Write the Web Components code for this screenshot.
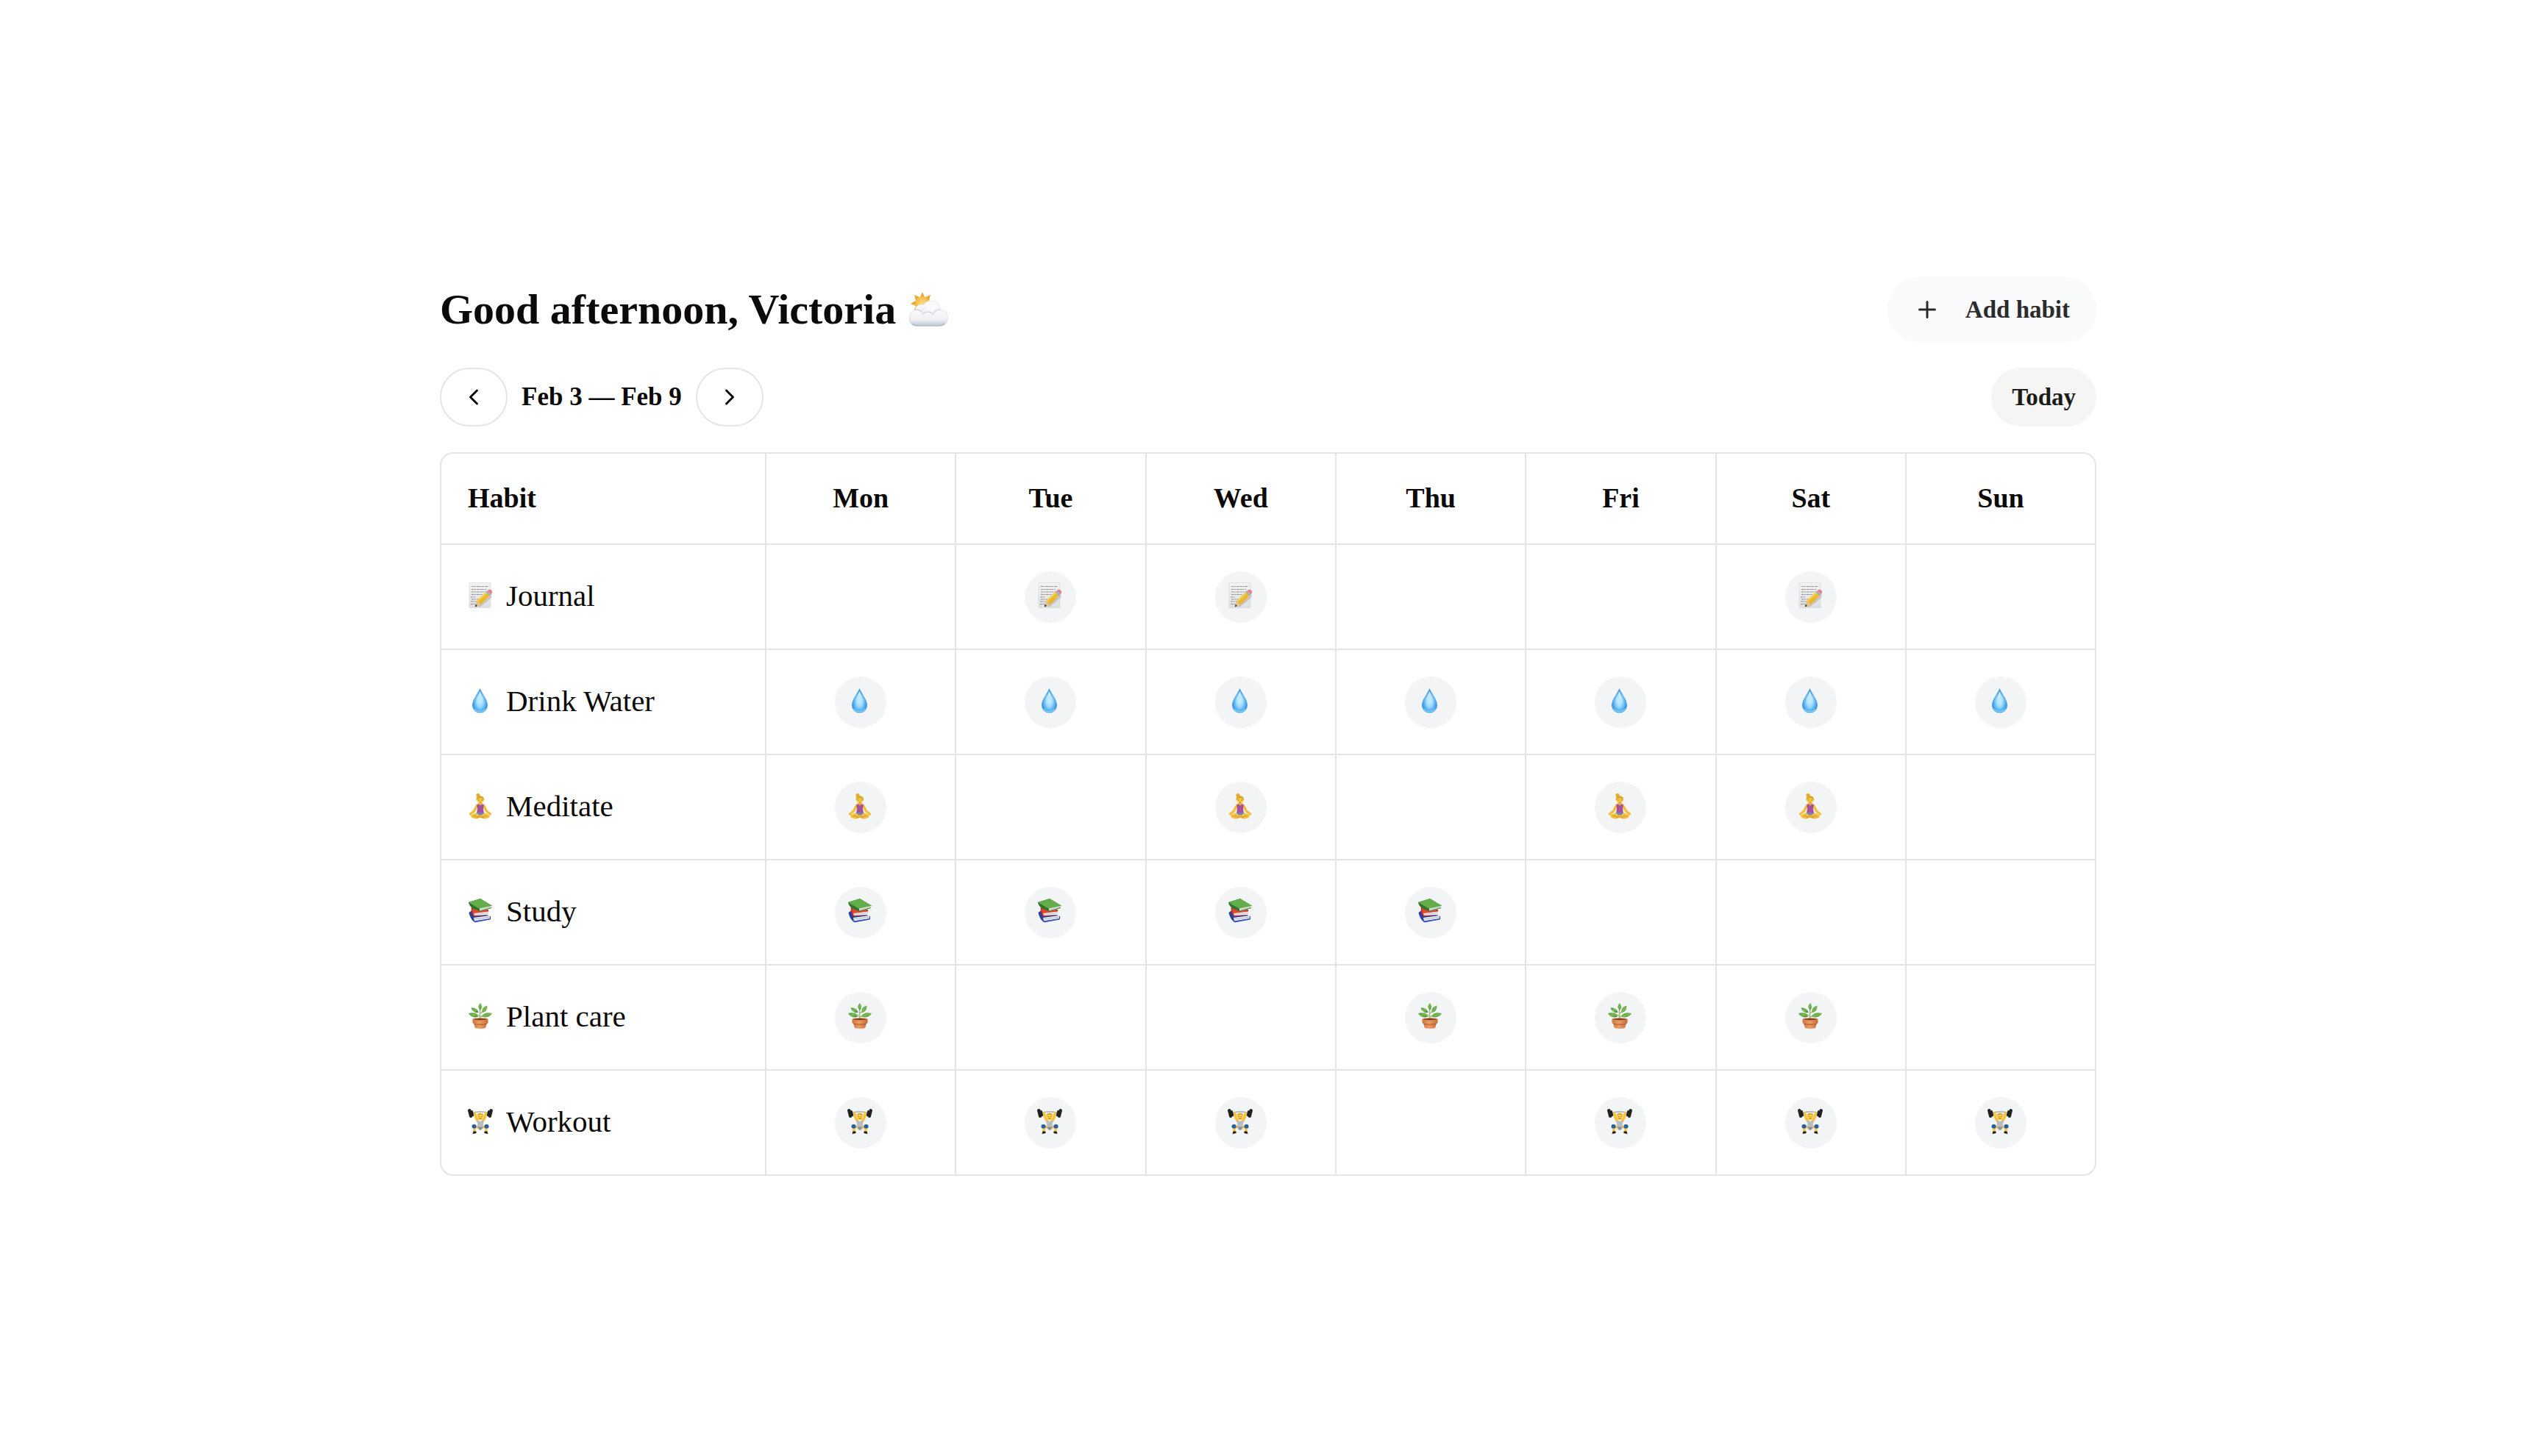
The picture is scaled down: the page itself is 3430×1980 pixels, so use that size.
<!DOCTYPE html>
<html lang="en">
<head>
<meta charset="utf-8">
<title>Habit tracker</title>
<style>
  body { margin: 0; background: #fff; color: #0c0a09; font-family: "Liberation Serif", serif; }
</style>
</head>
<body>
<habit-app>
  <habit-greeting>Good afternoon, Victoria</habit-greeting>
  <week-nav>Feb 3 — Feb 9</week-nav>
  <habit-table></habit-table>
</habit-app>

<script>
const attach = (el, html) => { el.attachShadow({ mode: "open" }).innerHTML = html; };

const ICONS = {
  cloud: ["0 0 54 48", `
    <defs>
      <radialGradient id="sun"><stop offset="0" stop-color="#fbe08a"/><stop offset="1" stop-color="#f1b93f"/></radialGradient>
      <radialGradient id="puff" cx=".5" cy=".35" r=".7"><stop offset="0" stop-color="#fff"/><stop offset=".6" stop-color="#f4f6f8"/><stop offset="1" stop-color="#cfd6df"/></radialGradient>
      <linearGradient id="base" x2="0" y2="1"><stop offset="0" stop-color="#fafbfc"/><stop offset=".65" stop-color="#eff1f5"/><stop offset="1" stop-color="#bcc5d1"/></linearGradient>
    </defs>
    <path fill="#e9a63a" d="M19 0l3 7h-6zM8 4l7 3-5 5zM30 4l-2 8-5-5zM3 16l7-4v7zM7 25l5-7 3 5z"/>
    <circle cx="19" cy="16" r="10" fill="url(#sun)"/>
    <path fill="url(#base)" stroke="#d3d9e1" stroke-width=".6" d="M12 46.500C4 46.500 1 41 1 35.500 1 29 5 25 9.500 24.500 10 19 15 16 20 17.500 23 13.500 27 12 31 12 38 12 43 17 43.500 24 50 24.500 53.500 29 53.500 35.500 53.500 42 49 46.500 42 46.500z"/>
    <circle cx="31" cy="23.500" r="11" fill="url(#puff)" opacity=".6"/>
    <path fill="url(#base)" opacity=".75" d="M4 42C1 36 4 26 12 25 17 25 19 27 20 30 24 26 31 27 34 31 37 25 43 24 47 26 54 29 54 39 50 43 46 47 8 47 4 42z"/>
    <path fill="none" stroke="#cbd2dc" stroke-width="1.200" d="M9.500 24.500c4-.5 8 1 10 4M19 31c4-5 11-5 14-1M33 31c2-5 6-7 10.500-7"/>
    <path fill="none" stroke="#aeb8c5" stroke-width="1.500" opacity=".7" d="M5 43c3 3 6 3 9 3h27c4 0 6-1 8-3"/>`],
  journal: ["0 0 36 36", `
    <defs><linearGradient id="page" x2="0" y2="1"><stop offset="0" stop-color="#f3f3f3"/><stop offset="1" stop-color="#dfdfdf"/></linearGradient>
    <linearGradient id="wood" x2="1" y2="1"><stop offset="0" stop-color="#f9d84c"/><stop offset="1" stop-color="#dd9d1a"/></linearGradient></defs>
    <path fill="url(#page)" stroke="#d8d8d8" stroke-width=".7" d="M2 .5h29v34H2z"/>
    <g fill="none" stroke="#888" stroke-width=".9" stroke-dasharray="3 .7 2 1 4 .8"><path d="M5 5.500h23M5 9.500h20M5 13h20M5 16.500h15M4 20h6M5 23h9M4 26h8M4 29.500h6"/></g>
    <path fill="#777" opacity=".3" d="M13 33l20-17-1 5-15 12z"/>
    <path fill="url(#wood)" d="M12 25l13.500-13 5 5.500-13.500 13z"/>
    <path fill="none" stroke="#fae77a" d="M13 25.500l13-12"/>
    <path fill="#e8bd88" d="M12 25l5 5.500-7 2.500z"/><path fill="#333" d="M10.500 29.500l2.500 2.500-3 1.500z"/>
    <path fill="#9eb0c3" d="M24.500 13l2-2 5 5.500-2 2z"/>
    <path fill="#e8808a" d="M26.500 11l2-1c3-1 5 2 4.500 4l-1.500 2.500z"/>`],
  water: ["0 0 36 36", `
    <defs><radialGradient id="drop" cx=".5" cy=".55" r=".55"><stop offset="0" stop-color="#c4eeff"/><stop offset=".4" stop-color="#93d5fa"/><stop offset=".75" stop-color="#46a3eb"/><stop offset="1" stop-color="#3c8fdd"/></radialGradient>
    <linearGradient id="shine" x2="0" y2="1"><stop offset="0" stop-color="#f2fcff"/><stop offset="1" stop-color="#c4edff" stop-opacity="0"/></linearGradient></defs>
    <path fill="url(#drop)" d="M16.500 1C18 6 27 16 27 24a10.500 10.500 0 0 1-21 0C6 16 15 6 16.500 1z"/>
    <path fill="url(#shine)" d="M16.500 5c2 6 5 10 5 15 0 6-10 6-10 0 0-5 3-9 5-15z"/>
    <path fill="none" stroke="#85ddff" stroke-width="1.500" opacity=".8" d="M9 29c3 5 12 5 15 0"/>`],
  meditate: ["0 0 36 36", `
    <g fill="none" stroke="#f3bd3a" stroke-linecap="round" stroke-linejoin="round">
      <path stroke-width="3.500" d="M12.500 17.500L8.500 25 3.500 29M21.500 17.500L25.500 25 30.500 29"/>
      <path stroke-width="3.500" d="M13 28.500L6 31.500M21 28.500l7 3"/>
      <path stroke-width="4" d="M7 32.500c4 1.500 8 .5 10-1 2 1.500 6 2.500 10 1"/>
    </g>
    <path fill="none" stroke="#c88920" stroke-width=".8" d="M8 31.500c3 1 6 0 9-2 3 2 6 3 9 2M12 34l5-1.500 5 1.500"/>
    <path fill="#e6ab30" d="M14.500 12h5v5h-5z"/>
    <circle cx="17" cy="9.500" r="4.800" fill="#f8cc45"/>
    <path fill="#dca62e" d="M11.700 11c-1-5 3-8 6-6.500 4 0 5 4 4 6.500-1-3-3-4-5-3.500-2 0-4 1-5 3.500z"/>
    <circle cx="14" cy="3.500" r="2.600" fill="#e3ac31"/>
    <path fill="none" stroke="#9c6a18" stroke-width=".8" d="M14 10h2M18 10h2M16 13h2"/>
    <path fill="#a8509a" d="M12.500 16l2-1c1 3 4 3 5 0l2 1c.5 3-.5 5-.5 6l1 6h-10l1-6c0-1-1-3-.5-6z"/>
    <path fill="#6f84bb" d="M12.500 27h9l-1 2.500-3.500 1-3.500-1z"/>`],
  study: ["0 0 36 36", `
    <path fill="#273f9d" d="M1.500 20l5.500-4 24 9v4l-22 4c-4-3-6-7-7.500-13z"/>
    <path fill="#eef0f4" d="M8 27l22-3v4.500L9 31.500z"/><path stroke="#8c98bd" stroke-width=".7" d="M9 29l21-3"/>
    <path fill="#3657bd" d="M9 31.500l21-3.500.5 1.500-21 4z"/>
    <path fill="#c52e22" d="M5 11l23 5v7L8 25.500c-3-4-4-9-3-14.500z"/>
    <path fill="#e34632" d="M6 12l22 6-21 3z"/>
    <path fill="#f3eeee" d="M8 21l20-2.500v4.500L9 24z"/><path stroke="#b8a9a9" stroke-width=".7" d="M8 22.500l20-2"/>
    <path fill="#2e752b" d="M1 6L17 1l16 10-17 7C5 15 2 11 1 6z"/>
    <path fill="#64ad4b" d="M1 6L17 1l16 9.500-17 4.500z"/>
    <path fill="#f4f5f1" d="M16 14.500l16-3.500-1 4-15 3z"/><path stroke="#a4aaa0" stroke-width=".7" d="M16 16l15-3.500"/>
    <path stroke="#378431" stroke-width="1.200" d="M16 18l16-4.500"/>`],
  plant: ["0 0 36 36", `
    <defs><linearGradient id="pot"><stop offset="0" stop-color="#cc7541"/><stop offset=".45" stop-color="#ee9c62"/><stop offset="1" stop-color="#c46c3e"/></linearGradient>
    <linearGradient id="leaf" x2="1" y2="1"><stop offset="0" stop-color="#4e9b3a"/><stop offset=".5" stop-color="#7bba55"/><stop offset="1" stop-color="#377f2d"/></linearGradient></defs>
    <path fill="none" stroke="#9dbd78" stroke-width="1.500" d="M16.500 22V9M17 19l8-4M16 18l-7-5M17 14l5-4"/>
    <g fill="url(#leaf)"><path d="M17 10c-4-3-3-7 0-10 2.500 3 2.500 7 0 10z"/><path d="M14.500 13C9 13.500 6 11 4.500 6.500c5-.5 9 1.500 10 6.500z"/><path d="M19.500 13c-1-5 2-8.500 7-9.500 0 5-2 9-7 9.500z"/><path d="M14 18.500C8 21 3 18 1 14c6-1.500 11-.5 13 4.500z"/><path d="M19 18.500c2-5 8-6 14-4.500-2 4-8 7-14 4.500z"/></g>
    <path fill="url(#pot)" d="M6.500 22h21v5l-2 1.500-1 4.500c-1 2.500-14 2.500-15 0l-1-4.500-2-1.500z"/>
    <ellipse cx="17" cy="22" rx="10.500" ry="1.800" fill="#d98450"/>
    <ellipse cx="17" cy="22" rx="9" ry="1.200" fill="#804321"/>
    <path fill="none" stroke="#a8552c" d="M8.500 28.500c4 1 13 1 17 0"/>`],
  workout: ["0 0 36 36", `
    <path fill="none" stroke="#aab0b5" stroke-width="1.500" d="M5 6.500c7-2 17-2 24 0"/>
    <g fill="none" stroke="#f5c23e" stroke-linecap="round" stroke-linejoin="round">
      <path stroke-width="3.500" d="M9.500 6.500L11 13l3.500 6M24.500 6.500L23 13l-3.500 6"/>
      <path stroke-width="3.500" d="M14.500 26L9 25v6M19.500 26l5.500-1v6"/>
    </g>
    <circle cx="17" cy="11.500" r="4.500" fill="#f8ce4a"/><path fill="#dba52f" d="M12.500 11c0-6 9-6 9 0-2-3-7-3-9 0z"/>
    <path fill="none" stroke="#995f20" stroke-width="1" d="M15 11.500h1M18 11.500h1M15.500 14h3"/>
    <path fill="#b9bcc0" d="M12.500 16.500c3 1.500 6 1.500 9 0L21 22l-.5 5-2 2.500h-3l-2-2.500L13 22z"/><path fill="#8b9095" d="M14 25.500h6l-1.500 4h-3z"/>
    <g fill="#202225"><rect x="1" y="1" width="4.500" height="12" rx="2" transform="rotate(-14 3 7)"/><rect x="5" y="3" width="2.500" height="8" rx="1" transform="rotate(-14 6 7)"/><rect x="28.500" y="1" width="4.500" height="12" rx="2" transform="rotate(14 31 7)"/><rect x="26.500" y="3" width="2.500" height="8" rx="1" transform="rotate(14 28 7)"/></g>
    <rect x="5.500" y="22" width="6" height="5.500" rx="2.500" fill="#265fa4"/><rect x="22.500" y="22" width="6" height="5.500" rx="2.500" fill="#265fa4"/>
    <path fill="#17191c" d="M6.500 35l1-3.500h4V34zM27.500 35l-1-3.500h-4V34z"/>`],
  plus: ["0 0 24 24", `<path fill="none" stroke="currentColor" stroke-width="2" stroke-linecap="round" d="M5 12h14M12 5v14"/>`],
  left: ["0 0 24 24", `<path fill="none" stroke="currentColor" stroke-width="2" stroke-linecap="round" stroke-linejoin="round" d="m15 18-6-6 6-6"/>`],
  right: ["0 0 24 24", `<path fill="none" stroke="currentColor" stroke-width="2" stroke-linecap="round" stroke-linejoin="round" d="m9 18 6-6-6-6"/>`]
};

customElements.define("habit-icon", class extends HTMLElement {
  connectedCallback() {
    if (this.shadowRoot) return;
    const [box, art] = ICONS[this.getAttribute("name")];
    attach(this, `<style>
      :host { display: block; flex: none; width: var(--icon-width, 36px); height: var(--icon-height, 36px); }
      svg { display: block; width: 100%; height: 100%; }
    </style><svg viewBox="${box}" aria-hidden="true">${art}</svg>`);
  }
});

customElements.define("pill-button", class extends HTMLElement {
  constructor() {
    super();
    attach(this, `<style>
      :host { display: block; }
      button {
        display: flex; align-items: center; justify-content: center; gap: 34px;
        box-sizing: border-box; width: 100%; height: 80px; margin: 0; padding: 0 28px;
        border: 0; border-radius: 40px; background: #f5f5f4; color: #1c1b19;
        font: bold 33px/40px "Liberation Serif", serif; cursor: pointer;
      }
      :host([kind="add"]) button { height: 88px; padding: 0 36px; border-radius: 44px; background: #f9fafc; color: #2b2b2b; }
      :host([kind="arrow"]) button { width: 92px; padding: 0; border: 2px solid #e5e5e4; background: #fff; color: #0c0a09; }
    </style><button type="button"><slot></slot></button>`);
  }
  connectedCallback() {
    const label = this.getAttribute("label");
    if (label) this.shadowRoot.querySelector("button").setAttribute("aria-label", label);
  }
});

customElements.define("habit-greeting", class extends HTMLElement {
  constructor() {
    super();
    attach(this, `<style>
      :host { display: flex; align-items: center; justify-content: space-between; }
      h1 { display: flex; align-items: center; gap: 17px; margin: 0; font-size: 58px; line-height: 64px; font-weight: bold; }
      h1 habit-icon { --icon-width: 54px; --icon-height: 48px; }
    </style>
    <h1><slot></slot><habit-icon name="cloud"></habit-icon></h1>
    <pill-button kind="add"><habit-icon name="plus"></habit-icon><span>Add habit</span></pill-button>`);
  }
});

customElements.define("week-nav", class extends HTMLElement {
  constructor() {
    super();
    attach(this, `<style>
      :host { display: flex; align-items: center; justify-content: space-between; }
      nav { display: flex; align-items: center; gap: 19px; font-size: 35px; line-height: 40px; font-weight: bold; }
    </style>
    <nav>
      <pill-button kind="arrow" label="Previous week"><habit-icon name="left"></habit-icon></pill-button>
      <span><slot></slot></span>
      <pill-button kind="arrow" label="Next week"><habit-icon name="right"></habit-icon></pill-button>
    </nav>
    <pill-button>Today</pill-button>`);
  }
});

customElements.define("habit-mark", class extends HTMLElement {
  connectedCallback() {
    if (this.shadowRoot) return;
    const icon = this.getAttribute("icon");
    attach(this, `<style>
      :host { display: flex; justify-content: center; }
      button {
        display: flex; align-items: center; justify-content: center; box-sizing: border-box;
        width: 70px; height: 70px; padding: 0 0 4px; border: 0; border-radius: 50%; background: transparent; cursor: pointer;
      }
      button[aria-pressed="true"] { background: #f3f4f6; }
    </style><button type="button" aria-pressed="${Boolean(icon)}" aria-label="${this.getAttribute("label")}">${icon ? `<habit-icon name="${icon}"></habit-icon>` : ""}</button>`);
  }
});

const DAYS = ["Mon", "Tue", "Wed", "Thu", "Fri", "Sat", "Sun"];
const HABITS = [
  ["journal", "Journal", "0110010"],
  ["water", "Drink Water", "1111111"],
  ["meditate", "Meditate", "1010110"],
  ["study", "Study", "1111000"],
  ["plant", "Plant care", "1001110"],
  ["workout", "Workout", "1110111"]
];

customElements.define("habit-table", class extends HTMLElement {
  constructor() {
    super();
    attach(this, `<style>
      :host { display: block; border: 2px solid #e5e5e4; border-radius: 18px; overflow: hidden; }
      table { width: 100%; table-layout: fixed; border-collapse: separate; border-spacing: 0; }
      th, td { box-sizing: border-box; padding: 0; border: solid #e5e5e4; border-width: 0 2px 2px 0; vertical-align: middle; }
      th:last-child, td:last-child { border-right: 0; }
      tbody tr:last-child > * { border-bottom: 0; }
      thead th { height: 124px; padding-bottom: 2px; font-size: 38px; line-height: 44px; font-weight: bold; text-align: center; }
      thead th:first-child { width: 442px; padding-left: 36px; text-align: left; }
      thead th:last-child { width: 256px; }
      tbody th, td { height: 143px; }
      tbody tr:last-child > * { height: 141px; }
      tbody th { padding: 0 0 4px 36px; font-size: 41px; line-height: 44px; font-weight: normal; text-align: left; }
      .name { display: flex; align-items: center; gap: 16px; }
    </style>
    <table>
      <thead><tr><th scope="col">Habit</th>${DAYS.map(d => `<th scope="col">${d}</th>`).join("")}</tr></thead>
      <tbody>${HABITS.map(([icon, name, week]) => `<tr>
        <th scope="row"><div class="name"><habit-icon name="${icon}"></habit-icon><span>${name}</span></div></th>
        ${DAYS.map((d, i) => `<td><habit-mark label="${name}, ${d}"${week[i] === "1" ? ` icon="${icon}"` : ""}></habit-mark></td>`).join("")}
      </tr>`).join("")}</tbody>
    </table>`);
  }
});

customElements.define("habit-app", class extends HTMLElement {
  constructor() {
    super();
    attach(this, `<style>
      :host { display: block; }
      main { display: flex; flex-direction: column; gap: 35px; padding: 377px 580px 64px 598px; }
    </style><main><slot></slot></main>`);
  }
});
</script>
</body>
</html>
